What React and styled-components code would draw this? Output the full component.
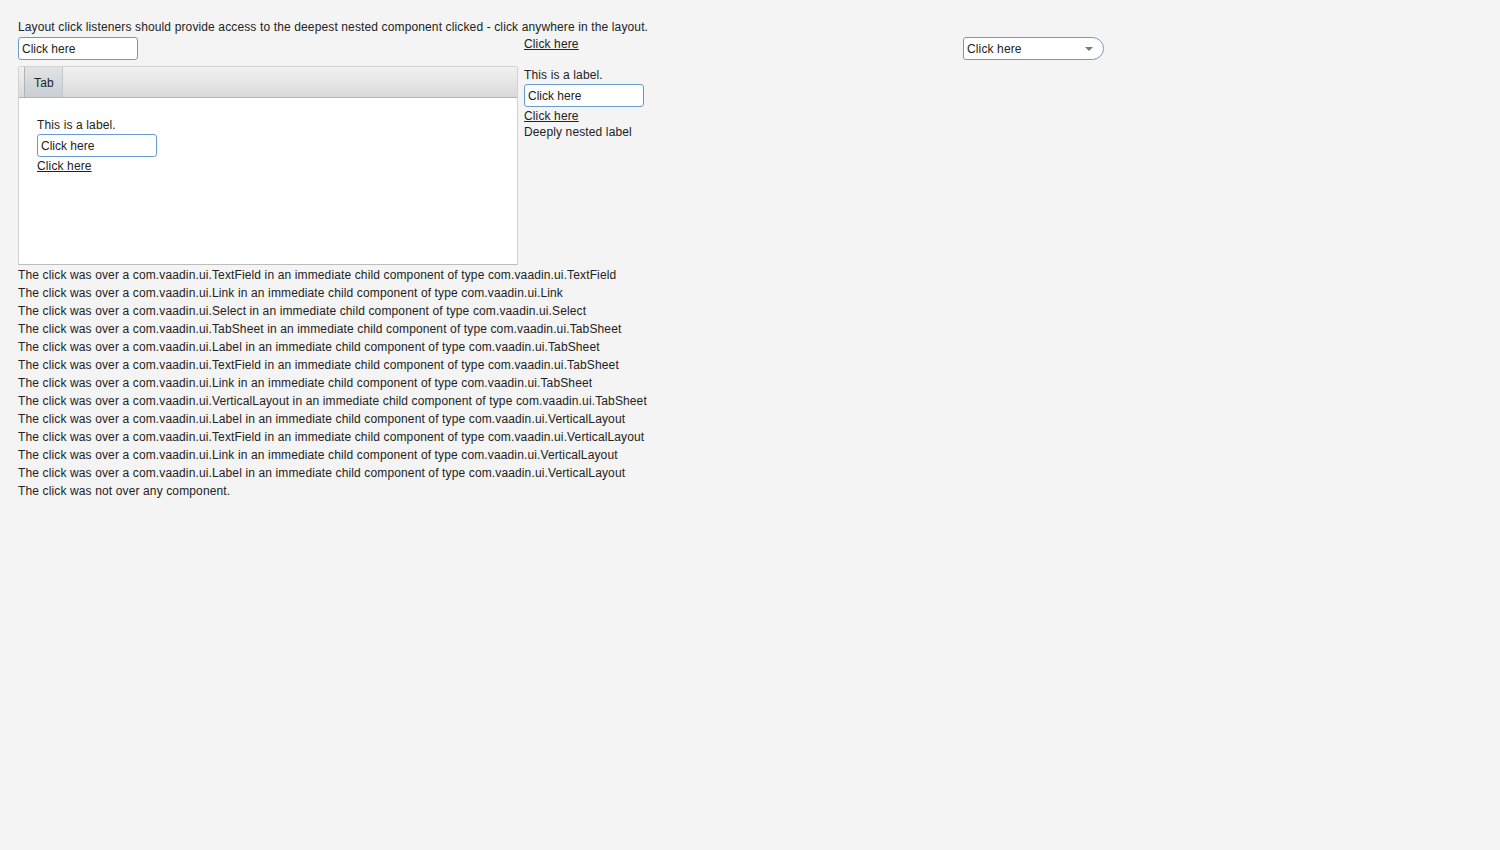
import React from 'react';
import styled, { createGlobalStyle } from 'styled-components';

const Global = createGlobalStyle`
  html, body { margin: 0; padding: 0; background: #f4f4f4; }
  body {
    font-family: "Liberation Sans", Arial, sans-serif;
    font-size: 12px;
    letter-spacing: 0.13px;
    color: #222;
  }
`

const Page = styled.div`
  padding: 20px 18px;
  display: flex;
  flex-direction: column;
`

const Caption = styled.div`
  line-height: 15px;
  margin-bottom: 2px;
`

const Grid = styled.div`
  display: grid;
  grid-template-columns: 500px 433px auto;
  grid-template-rows: 23px auto;
  column-gap: 6px;
  row-gap: 6px;
  align-items: start;
`

const Field = styled.input`
  box-sizing: border-box;
  width: 120px;
  height: 23px;
  padding: 0 3px;
  border: 1px solid #6a9bd0;
  border-radius: 3px;
  background: #fff;
  font: inherit;
  color: #222;
  outline: none;
`

const Anchor = styled.a`
  color: #222;
  text-decoration: underline;
  line-height: 15px;
  cursor: pointer;
  margin-top: ${p => p.$top || 0}px;
`

const Text = styled.div`
  line-height: 15px;
  margin-top: ${p => p.$top || 0}px;
`

const Stack = styled.div`
  display: flex;
  flex-direction: column;
  align-items: flex-start;
  gap: ${p => p.$gap || 0}px;
`

const Select = styled.div`
  box-sizing: border-box;
  width: 141px;
  height: 23px;
  border: 1px solid #6a9bd0;
  border-radius: 3px 12px 12px 3px;
  background: #fff;
  display: flex;
  align-items: center;
  justify-content: space-between;
  padding: 0 10px 0 3px;
`

const Arrow = styled.span`
  width: 0;
  height: 0;
  border-left: 4px solid transparent;
  border-right: 4px solid transparent;
  border-top: 4px solid #7a7a7a;
`

const Sheet = styled.div`
  box-sizing: border-box;
  width: 500px;
  height: 199px;
  border: 1px solid #d2d2d2;
  border-bottom-color: #bdbdbd;
  border-radius: 3px 3px 0 0;
  background: #fff;
  display: flex;
  flex-direction: column;
`

const TabBar = styled.div`
  height: 31px;
  box-sizing: border-box;
  border-bottom: 1px solid #b4b4b4;
  background: linear-gradient(#f1f1f1, #dadada);
  display: flex;
  padding-left: 5px;
`

const Tab = styled.div`
  display: flex;
  align-items: center;
  padding: 2px 8px 0 9px;
  border-left: 1px solid #b0b4b8;
  border-right: 1px solid #c4c7ca;
  background: linear-gradient(#e1e4e7, #c9ced2);
  color: #222;
`

const SheetBody = styled.div`
  padding: 18px 18px;
`

const Log = styled.div`
  margin-top: 1px;
  display: flex;
  flex-direction: column;
`

const LogLine = styled.div`
  line-height: 18px;
`

const log = [
  'The click was over a com.vaadin.ui.TextField in an immediate child component of type com.vaadin.ui.TextField',
  'The click was over a com.vaadin.ui.Link in an immediate child component of type com.vaadin.ui.Link',
  'The click was over a com.vaadin.ui.Select in an immediate child component of type com.vaadin.ui.Select',
  'The click was over a com.vaadin.ui.TabSheet in an immediate child component of type com.vaadin.ui.TabSheet',
  'The click was over a com.vaadin.ui.Label in an immediate child component of type com.vaadin.ui.TabSheet',
  'The click was over a com.vaadin.ui.TextField in an immediate child component of type com.vaadin.ui.TabSheet',
  'The click was over a com.vaadin.ui.Link in an immediate child component of type com.vaadin.ui.TabSheet',
  'The click was over a com.vaadin.ui.VerticalLayout in an immediate child component of type com.vaadin.ui.TabSheet',
  'The click was over a com.vaadin.ui.Label in an immediate child component of type com.vaadin.ui.VerticalLayout',
  'The click was over a com.vaadin.ui.TextField in an immediate child component of type com.vaadin.ui.VerticalLayout',
  'The click was over a com.vaadin.ui.Link in an immediate child component of type com.vaadin.ui.VerticalLayout',
  'The click was over a com.vaadin.ui.Label in an immediate child component of type com.vaadin.ui.VerticalLayout',
  'The click was not over any component.',
]

export default function App() {
  return (
    <>
      <Global />
      <Page>
        <Caption>Layout click listeners should provide access to the deepest nested component clicked - click anywhere in the layout.</Caption>
        <Grid>
          <Field defaultValue="Click here" />
          <Anchor>Click here</Anchor>
          <Select>
            <span>Click here</span>
            <Arrow />
          </Select>
          <Sheet>
            <TabBar>
              <Tab>Tab</Tab>
            </TabBar>
            <SheetBody>
              <Stack $gap={1}>
                <Text $top={2}>This is a label.</Text>
                <Field defaultValue="Click here" />
                <Anchor $top={1}>Click here</Anchor>
              </Stack>
            </SheetBody>
          </Sheet>
          <Stack $gap={1}>
            <Text $top={2}>This is a label.</Text>
            <Field defaultValue="Click here" />
            <Anchor $top={1}>Click here</Anchor>
            <Text>Deeply nested label</Text>
          </Stack>
        </Grid>
        <Log>
          {log.map((l, i) => <LogLine key={i}>{l}</LogLine>)}
        </Log>
      </Page>
    </>
  )
}
